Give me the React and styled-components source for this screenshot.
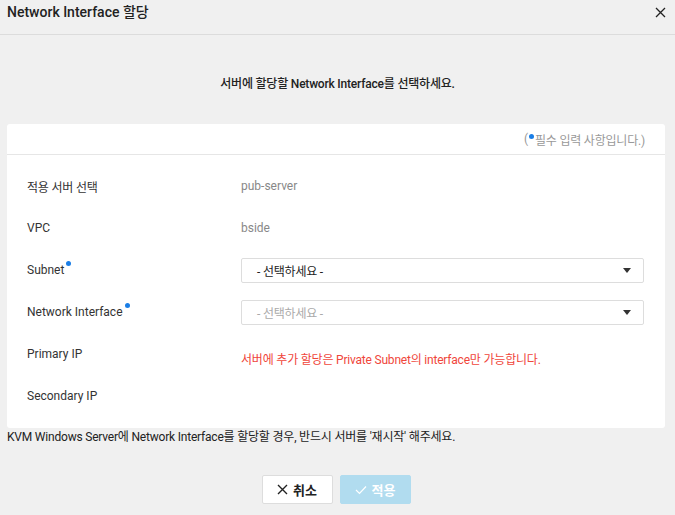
import React from 'react';
import styled, { createGlobalStyle } from 'styled-components';

const Global = createGlobalStyle`
  html, body { margin: 0; padding: 0; background: #f0f0f0; }
  body { font-family: Roboto, "Noto Sans CJK KR", sans-serif; color: #333; letter-spacing: -0.2px; }
`;

const Dialog = styled.div`
  width: 675px;
  height: 515px;
  background: #f0f0f0;
  display: flex;
  flex-direction: column;
`;

const Header = styled.div`
  height: 35px;
  display: flex;
  align-items: flex-start;
  justify-content: space-between;
  padding: 2px 9px 0 7px;
  box-sizing: border-box;
  border-bottom: 1px solid #dcdcdc;
`;

const Title = styled.h1`
  margin: 0;
  font-size: 14px;
  font-weight: 500;
  line-height: 20px;
  letter-spacing: 0;
  color: #222;
`;

const Close = styled.button`
  border: 0;
  background: none;
  padding: 0;
  margin-top: 5px;
  width: 11px;
  height: 11px;
  display: flex;
  cursor: pointer;
`;

const Guide = styled.p`
  margin: 40px 0 0;
  text-align: center;
  font-size: 12px;
  font-weight: 500;
  color: #222;
  line-height: 18px;
`;

const Card = styled.div`
  margin: 31px 10px 0 7px;
  background: #fff;
  border-radius: 3px;
`;

const CardHead = styled.div`
  height: 30px;
  border-bottom: 1px solid #e6e6e6;
  display: flex;
  align-items: center;
  justify-content: flex-end;
  padding-right: 20px;
  font-size: 12px;
  color: #999;
`;

const Dot = styled.span`
  display: inline-block;
  width: 5px;
  height: 5px;
  border-radius: 50%;
  background: #1a7ee6;
  vertical-align: ${p => (p.$sup ? 'top' : 'middle')};
  margin: ${p => (p.$sup ? '-2px 0 0 2px' : '-6px 1px 0 1px')};
`;

const Body = styled.div`
  padding: 10px 20px 11px 20px;
`;

const Row = styled.div`
  height: 42px;
  display: grid;
  grid-template-columns: 214px 1fr;
  align-items: center;
  font-size: 12px;
`;

const Label = styled.div`
  color: #333;
  letter-spacing: ${p => (p.$latin ? '0' : '-0.2px')};
`;

const Value = styled.div`
  color: ${p => (p.$error ? '#f0463b' : '#888')};
  padding-top: ${p => (p.$error ? '8px' : '0')};
  letter-spacing: ${p => (p.$error ? '-0.2px' : '0')};
`;

const Select = styled.div`
  height: 25px;
  box-sizing: border-box;
  border: 1px solid #ddd;
  border-radius: 2px;
  display: flex;
  align-items: center;
  justify-content: space-between;
  padding: 0 12px 0 15px;
  font-size: 12px;
  color: ${p => (p.$disabled ? '#aaa' : '#222')};
  margin-right: 1px;
`;

const Caret = styled.span`
  width: 0;
  height: 0;
  border-left: 4px solid transparent;
  border-right: 4px solid transparent;
  border-top: 5px solid #333;
`;

const Note = styled.p`
  margin: 0 0 0 7px;
  font-size: 12px;
  color: #222;
  line-height: 18px;
`;

const Buttons = styled.div`
  display: flex;
  justify-content: center;
  gap: 7px;
  margin-top: 29px;
  padding-right: 3px;
`;

const Button = styled.button`
  width: 71px;
  height: 29px;
  box-sizing: border-box;
  border: 1px solid ${p => (p.$primary ? '#b1dcef' : '#ddd')};
  background: ${p => (p.$primary ? '#b1dcef' : '#fff')};
  color: ${p => (p.$primary ? '#fff' : '#222')};
  border-radius: 2px;
  font-family: Roboto, "Noto Sans CJK KR", sans-serif;
  font-size: 13px;
  font-weight: 700;
  display: flex;
  align-items: center;
  justify-content: center;
  gap: 5px;
  padding: 0;
`;

const rows = [
  { label: '적용 서버 선택', value: 'pub-server' },
  { label: 'VPC', value: 'bside', latin: true },
  { label: 'Subnet', required: true, select: '- 선택하세요 -', latin: true },
  { label: 'Network Interface', required: true, select: '- 선택하세요 -', disabled: true, latin: true },
  { label: 'Primary IP', error: '서버에 추가 할당은 Private Subnet의 interface만 가능합니다.', latin: true },
  { label: 'Secondary IP', latin: true },
];

export default function App() {
  return (
    <Dialog>
      <Global />
      <Header>
        <Title>Network Interface 할당</Title>
        <Close aria-label="close">
          <svg width="11" height="11" viewBox="0 0 11 11">
            <path d="M1 1L10 10M10 1L1 10" stroke="#222" strokeWidth="1.3" />
          </svg>
        </Close>
      </Header>
      <Guide>서버에 할당할 Network Interface를 선택하세요.</Guide>
      <Card>
        <CardHead>
          (<Dot />필수 입력 사항입니다.)
        </CardHead>
        <Body>
          {rows.map(r => (
            <Row key={r.label}>
              <Label $latin={r.latin}>
                {r.label}
                {r.required && <Dot $sup />}
              </Label>
              {r.select ? (
                <Select $disabled={r.disabled}>
                  {r.select}
                  <Caret />
                </Select>
              ) : (
                <Value $error={!!r.error}>{r.error || r.value}</Value>
              )}
            </Row>
          ))}
        </Body>
      </Card>
      <Note>KVM Windows Server에 Network Interface를 할당할 경우, 반드시 서버를 '재시작' 해주세요.</Note>
      <Buttons>
        <Button>
          <svg width="11" height="11" viewBox="0 0 11 11">
            <path d="M1 1L10 10M10 1L1 10" stroke="#222" strokeWidth="1.4" />
          </svg>
          취소
        </Button>
        <Button $primary>
          <svg width="12" height="10" viewBox="0 0 12 10">
            <path d="M1 5L4.5 8.5L11 1.5" stroke="#fff" strokeWidth="1.2" fill="none" />
          </svg>
          적용
        </Button>
      </Buttons>
    </Dialog>
  );
}
